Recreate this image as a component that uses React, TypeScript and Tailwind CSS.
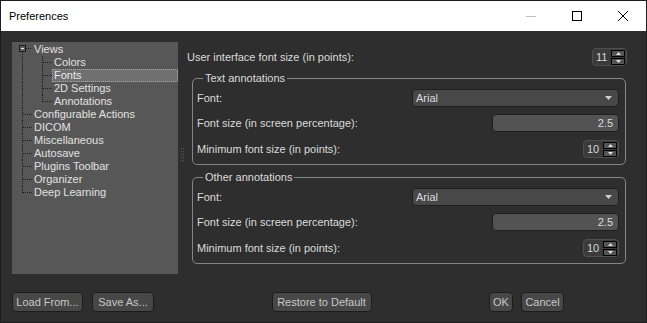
import React from 'react';

type TreeItem = { label: string; level: 0 | 1; last?: boolean; selected?: boolean; root?: boolean };

const tree: TreeItem[] = [
  { label: 'Views', level: 0, root: true },
  { label: 'Colors', level: 1 },
  { label: 'Fonts', level: 1, selected: true },
  { label: '2D Settings', level: 1 },
  { label: 'Annotations', level: 1, last: true },
  { label: 'Configurable Actions', level: 0 },
  { label: 'DICOM', level: 0 },
  { label: 'Miscellaneous', level: 0 },
  { label: 'Autosave', level: 0 },
  { label: 'Plugins Toolbar', level: 0 },
  { label: 'Organizer', level: 0 },
  { label: 'Deep Learning', level: 0, last: true },
];

const dot = { stroke: '#1c1c1c', strokeWidth: 1, strokeDasharray: '1 1', shapeRendering: 'crispEdges' as const };

const Connector = ({ item }: { item: TreeItem }) => {
  if (item.level === 1) {
    return (
      <svg width="40" height="13" className="shrink-0">
        <line x1="10.5" y1="0" x2="10.5" y2="13" {...dot} />
        <line x1="30.5" y1="0" x2="30.5" y2={item.last ? 7 : 13} {...dot} />
        <line x1="31" y1="6.5" x2="40" y2="6.5" {...dot} />
      </svg>
    );
  }
  if (item.root) {
    return (
      <svg width="20" height="13" className="shrink-0">
        <rect x="7.5" y="2.5" width="6" height="6" fill="#5e5e5e" stroke="#1c1c1c" shapeRendering="crispEdges" />
        <line x1="9" y1="5.5" x2="12" y2="5.5" stroke="#e8e8e8" shapeRendering="crispEdges" />
        <line x1="10.5" y1="9" x2="10.5" y2="13" {...dot} />
        <line x1="14" y1="5.5" x2="20" y2="5.5" {...dot} />
      </svg>
    );
  }
  return (
    <svg width="20" height="13" className="shrink-0">
      <line x1="10.5" y1="0" x2="10.5" y2={item.last ? 7 : 13} {...dot} />
      <line x1="11" y1="6.5" x2="20" y2="6.5" {...dot} />
    </svg>
  );
};

const SpinButtons = () => (
  <div className="flex flex-col gap-px">
    <div className="w-[14px] h-[7px] border border-black bg-[#555555] flex items-center justify-center">
      <svg width="5" height="3"><polygon points="2.5,0 5,3 0,3" fill="#e0e0e0" /></svg>
    </div>
    <div className="w-[14px] h-[7px] border border-black bg-[#555555] flex items-center justify-center">
      <svg width="5" height="3"><polygon points="0,0 5,0 2.5,3" fill="#e0e0e0" /></svg>
    </div>
  </div>
);

const SpinBox = ({ value, width }: { value: string; width: string }) => (
  <div className={`${width} h-[18px] rounded-[4px] border border-[#4f4f4f] bg-[#3b3b3b] flex items-center pl-[3px] pr-px`}>
    <span className="text-[#d8d8d8]">{value}</span>
    <div className="ml-auto">
      <SpinButtons />
    </div>
  </div>
);

const Group = ({ title }: { title: string }) => (
  <fieldset className="ml-[5px] mr-px rounded-[5px] border border-[#858585] pl-[4px] pr-[6px] pb-[6px]">
    <legend className="ml-[6px] px-[2px] leading-[13px] text-[#dcdcdc]">{title}</legend>
    <div className="flex flex-col pt-[4px]">
      <div className="flex items-center justify-between h-[18px]">
        <span>Font:</span>
        <div className="w-[207px] h-[18px] rounded-[4px] border border-[#1e1e1e] bg-[#484848] flex items-center pl-[3px] pr-[6px]">
          <span>Arial</span>
          <svg width="7" height="4" className="ml-auto">
            <polygon points="0,0 7,0 3.5,4" fill="#d0d0d0" />
          </svg>
        </div>
      </div>
      <div className="flex items-center justify-between h-[18px] mt-[7px]">
        <span>Font size (in screen percentage):</span>
        <div className="w-[127px] h-[18px] rounded-[4px] border border-[#1e1e1e] bg-[#535353] flex items-center justify-end pr-[5px]">
          <span>2.5</span>
        </div>
      </div>
      <div className="flex items-center justify-between h-[18px] mt-[8px]">
        <span>Minimum font size (in points):</span>
        <SpinBox value="10" width="w-[36px]" />
      </div>
    </div>
  </fieldset>
);

const Button = ({ label, className = '' }: { label: string; className?: string }) => (
  <button className={`h-[20px] rounded-[4px] border border-[#1c1c1c] bg-[#474747] text-[#c8c8c8] text-[11px] leading-none ${className}`}>
    {label}
  </button>
);

export default function App() {
  return (
    <div className="w-[647px] h-[323px] border border-[#1e1e1e] flex flex-col font-['Liberation_Sans',Arial,sans-serif] text-[11px] text-[#dcdcdc] overflow-hidden">
      {/* title bar */}
      <div className="h-[30px] bg-white flex items-center shrink-0">
        <span className="pl-[8px] text-[11px] text-black">Preferences</span>
        <div className="ml-auto flex h-full">
          <div className="w-[46px] flex items-center justify-center">
            <svg width="10" height="10"><line x1="0" y1="5.5" x2="10" y2="5.5" stroke="#c0c0c0" /></svg>
          </div>
          <div className="w-[46px] flex items-center justify-center">
            <svg width="10" height="10"><rect x="0.5" y="0.5" width="9" height="9" fill="none" stroke="#000" /></svg>
          </div>
          <div className="w-[46px] flex items-center justify-center">
            <svg width="10" height="10">
              <line x1="0" y1="0" x2="10" y2="10" stroke="#000" />
              <line x1="10" y1="0" x2="0" y2="10" stroke="#000" />
            </svg>
          </div>
        </div>
      </div>

      {/* body */}
      <div className="flex-1 bg-[#2e2e2e] flex flex-col pt-[11px] pb-[10px]">
        <div className="flex h-[232px] pl-[11px]">
          {/* tree */}
          <div className="w-[166px] h-full bg-[#575757] pt-px">
            {tree.map((item) => (
              <div key={item.label} className="flex h-[13px] items-stretch">
                <Connector item={item} />
                <div
                  className={`flex-1 flex items-center pl-[2px] leading-[13px] ${
                    item.selected ? 'bg-[#707070] outline outline-dotted outline-[#a8a8a8] -outline-offset-1 text-[#e8e8e8]' : 'text-[#e2e2e2]'
                  }`}
                >
                  {item.label}
                </div>
              </div>
            ))}
          </div>

          {/* splitter */}
          <div className="w-[9px] flex items-center justify-center">
            <svg width="3" height="15" className="-mt-[6px]">
              {[0, 3, 6, 9, 12].map((y) => (
                <g key={y}>
                  <rect x="0" y={y} width="1" height="1" fill="#555" />
                  <rect x="2" y={y} width="1" height="1" fill="#555" />
                  <rect x="1" y={y + 1} width="1" height="1" fill="#444" />
                </g>
              ))}
            </svg>
          </div>

          {/* content */}
          <div className="w-[440px] flex flex-col pt-[6px]">
            <div className="flex items-center justify-between h-[18px]">
              <span>User interface font size (in points):</span>
              <SpinBox value="11" width="w-[35px]" />
            </div>
            <div className="mt-[6px]">
              <Group title="Text annotations" />
            </div>
            <div className="mt-[6px]">
              <Group title="Other annotations" />
            </div>
          </div>
        </div>

        {/* buttons */}
        <div className="mt-auto flex items-center pl-[11px] pr-[82px]">
          <Button label="Load From..." className="w-[71px]" />
          <Button label="Save As..." className="w-[62px] ml-[9px]" />
          <div className="flex-1" />
          <Button label="Restore to Default" className="w-[100px]" />
          <div className="flex-1" />
          <Button label="OK" className="w-[24px]" />
          <Button label="Cancel" className="w-[43px] ml-[8px]" />
        </div>
      </div>
    </div>
  );
}
